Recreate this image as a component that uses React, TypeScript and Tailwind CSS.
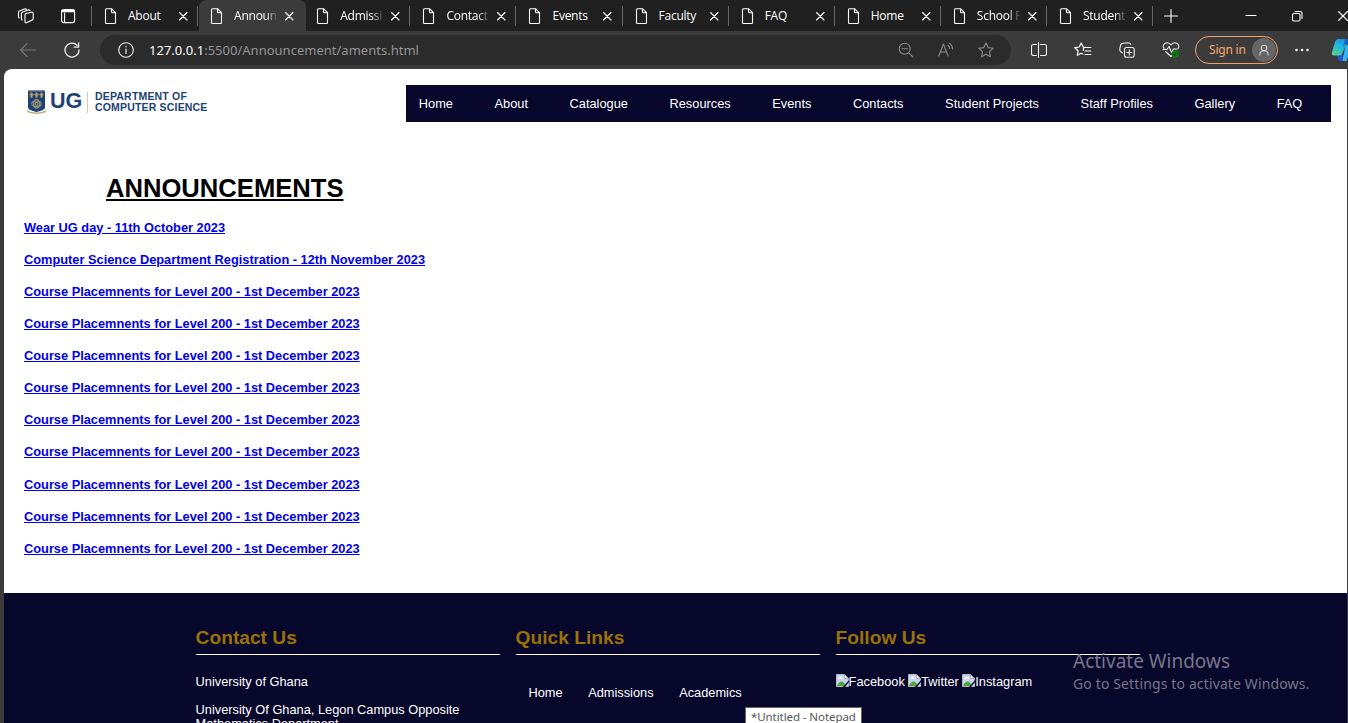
import type { ReactNode } from 'react'

const tabs = [
  { label: 'About' },
  { label: 'Announ', active: true, fade: true },
  { label: 'Admissi', fade: true },
  { label: 'Contact', fade: true },
  { label: 'Events' },
  { label: 'Faculty' },
  { label: 'FAQ' },
  { label: 'Home' },
  { label: 'School F', fade: true },
  { label: 'Student', fade: true },
]

const navLinks = ['Home', 'About', 'Catalogue', 'Resources', 'Events', 'Contacts', 'Student Projects', 'Staff Profiles', 'Gallery', 'FAQ']

const announcements = [
  'Wear UG day - 11th October 2023',
  'Computer Science Department Registration - 12th November 2023',
  ...Array.from({ length: 9 }, () => 'Course Placemnents for Level 200 - 1st December 2023'),
]

function Icon({ size = 16, className = '', children }: { size?: number; className?: string; children: ReactNode }) {
  return (
    <svg width={size} height={size} viewBox={`0 0 ${size} ${size}`} fill="none" stroke="currentColor" strokeWidth="1.1" strokeLinejoin="round" strokeLinecap="round" className={`shrink-0 ${className}`}>
      {children}
    </svg>
  )
}

function Tab({ label, active, fade }: { label: string; active?: boolean; fade?: boolean }) {
  return (
    <div className={`flex h-[31px] shrink-0 items-center ${active ? 'ml-px -mr-[1.500px] w-[106.700px] rounded-t-[7px] bg-[#3b3b3b] pl-[10px]' : 'w-[106.100px] pl-[11px]'}`}>
      <Icon className="text-white">
        <path d="M3.5 .7h5l4 4v9.8q0 1-1 1h-8q-1 0-1-1V1.7q0-1 1-1zM8.5 .7v3q0 1 1 1h3" />
      </Icon>
      <div className={`ml-[9px] w-[44px] overflow-hidden text-[12px] leading-4 tracking-[-0.250px] whitespace-nowrap text-white [font-family:'Open_Sans','Noto_Sans',sans-serif] ${fade ? '[mask-image:linear-gradient(to_right,black_72%,transparent)]' : ''}`}>{label}</div>
      <Icon size={12} className="ml-[5px] text-white">
        <path d="M2.5 2.5l7.5 7.5M10 2.5L2.5 10" />
      </Icon>
      <div className={`ml-auto h-5 w-px ${active ? '' : 'bg-[#666]'}`} />
    </div>
  )
}

function Cell({ width, children }: { width: string; children: ReactNode }) {
  return <div className={`flex h-full shrink-0 items-center justify-center ${width}`}>{children}</div>
}

function TabBar() {
  return (
    <div className="flex h-[31px] items-center bg-[#202020] text-white">
      <div className="flex w-[91px] shrink-0 items-center">
        <Icon size={18} className="ml-[17px]">
          <path d="M8 7.800q0-1 1-1.300l5.500-1.300q1.700-.3 1.700 1.300v5q0 1-.9 1.400l-5.300 2.700Q8 16.300 8 14.800zM5 13q-.6-.6-.6-1.500V6.600q0-1 .9-1.400L11 3q1.200-.4 2 .6M2.200 11Q1.500 10.500 1.500 9.500V5.400q0-1 .9-1.400l5-2q1.300-.5 2.200.5" />
        </Icon>
        <Icon className="ml-[25px]">
          <rect x="1.6" y="1.6" width="13" height="13" rx="2" />
          <path d="M2.500 3h11.300" strokeWidth="2.500" />
          <path d="M4.600 5v9.500" />
        </Icon>
      </div>
      <div className="h-5 w-px bg-[#666]" />
      {tabs.map((t) => (
        <Tab key={t.label} {...t} />
      ))}
      <Icon className="ml-[10px]">
        <path d="M8 1.500v13M1.500 8h13" />
      </Icon>
      <div className="ml-auto flex h-full w-[120px] shrink-0 overflow-hidden">
        <Cell width="w-[46px]">
          <Icon size={12}><path d="M1 5.500h10" /></Icon>
        </Cell>
        <Cell width="w-[46px]">
          <Icon size={12}>
            <rect x="1.500" y="3.500" width="7.500" height="7.500" rx="1.500" />
            <path d="M4 1.500h5q2 0 2 2v5" />
          </Icon>
        </Cell>
        <Cell width="w-[46px]">
          <Icon size={12}><path d="M1.500 1.500l9 9M10.500 1.500l-9 9" /></Icon>
        </Cell>
      </div>
    </div>
  )
}

const STAR = 'M8 .9l2.2 4.7 5.1.6-3.8 3.5 1 5.1L8 12.3l-4.5 2.5 1-5.1L.7 6.2l5.1-.6z'

function Toolbar() {
  return (
    <div className="flex h-[38px] items-center overflow-hidden bg-[#3b3b3b] text-[#f0f0f0]">
      <Icon className="ml-5 text-[#777]">
        <path d="M.7 8h15M7 1.500L.7 8 7 14.500" />
      </Icon>
      <Icon className="ml-[28px]">
        <path d="M15 8A7 7 0 1 1 13 3.200M14.600 .8v4.400h-4.400" strokeWidth="1.300" />
      </Icon>
      <div className="ml-5 flex h-[30px] w-[911px] shrink-0 items-center rounded-full bg-[#2b2b2b] pr-[5px] pl-[18px]">
        <Icon>
          <circle cx="8" cy="8" r="7.300" />
          <path d="M8 7v4.500M8 4.300v.5" />
        </Icon>
        <div className="ml-[15px] text-[13px] leading-5 tracking-[0.010px] whitespace-nowrap text-[#959595]">
          <span className="text-white">127.0.0.1</span>:5500/Announcement/aments.html
        </div>
        <div className="ml-auto flex h-full text-[#8a8a8a]">
          <Cell width="w-10">
            <Icon>
              <circle cx="6.700" cy="6.700" r="5.500" />
              <path d="M10.800 10.800l4 4M4 6.700h5.400" />
            </Icon>
          </Cell>
          <Cell width="w-10">
            <Icon>
              <path d="M.7 14L5.400 2l4.700 12M2.400 10h6M10 3.300q1.400 1 1.600 3.200M11.700 1.400q2.600 2 2.900 5.600" />
            </Icon>
          </Cell>
          <Cell width="w-10">
            <Icon><path d={STAR} /></Icon>
          </Cell>
        </div>
      </div>
      <div className="ml-[6px] flex h-full">
        <Cell width="w-11">
          <Icon>
            <path d="M5.500 2.500H2.500Q.5 2.500 .5 4.500v7q0 2 2 2h3M9.500 2.500h4q2 0 2 2v7q0 2-2 2h-4M7.500 .5v15" />
          </Icon>
        </Cell>
        <Cell width="w-11">
          <Icon size={18} className="text-white">
            <path d="M8.800 13L7 12.300l-3.700 2 .8-4.600L.8 6.700l4.400-.7L7.200 2l2 4 2.300.3M9.500 7l-.1 2.500M9.800 6.500h7M11 10h5.800M11 13.500h5.800" strokeWidth="1.200" />
          </Icon>
        </Cell>
        <Cell width="w-11">
          <Icon>
            <rect x="5.500" y="5.500" width="9.700" height="9.700" rx="2" />
            <path d="M10.300 8v5M7.800 10.500h5M3.500 11L1.500 9.500Q.6 8.500.8 7l.8-4Q2 1.300 4 1.200l5-.4q2 0 2.700 1.500" />
          </Icon>
        </Cell>
        <Cell width="w-11">
          <Icon size={18}>
            <path d="M2.200 8Q.5 5.500 1.800 3.500 3 1.600 5.300 1.700 7.500 1.800 9 3.800q1.500-2 3.700-2.100 2.300-.1 3.500 1.800Q17.500 5.500 15.800 8M1 8.500h4L7 5.500l2.700 6L11.500 8h3M3.500 10.500L9 15.500l2-1.800" />
            <circle cx="13.300" cy="13" r="3.700" fill="#107c10" stroke="none" />
            <path d="M11.500 13l1.300 1.200 2-2.200" stroke="#0b4f0b" />
          </Icon>
        </Cell>
      </div>
      <div className="ml-[2px] flex h-7 w-[83px] shrink-0 items-center justify-between rounded-full border border-[#f0a067] pr-[1px] pl-[13px] text-[12px] text-[#f7a871]">
        <span className="tracking-[-0.200px] whitespace-nowrap">Sign in</span>
        <span className="flex size-6 items-center justify-center rounded-full bg-[#666] text-[#d0d0d0]">
          <Icon size={12}>
            <circle cx="6" cy="4" r="2.800" />
            <path d="M1.800 11q0-4.200 4.200-4.200T10.200 11" />
          </Icon>
        </span>
      </div>
      <Icon className="ml-4">
        <g fill="currentColor" stroke="none">
          <circle cx="2.500" cy="8" r="1.300" />
          <circle cx="8" cy="8" r="1.300" />
          <circle cx="13.500" cy="8" r="1.300" />
        </g>
      </Icon>
      <svg width="24" height="24" viewBox="0 0 24 24" className="ml-[21px] shrink-0">
        <defs>
          <linearGradient id="cpA" x1="0.600" y1="0" x2="0.200" y2="1">
            <stop offset="0" stopColor="#1597e8" />
            <stop offset="0.450" stopColor="#22b8d8" />
            <stop offset="1" stopColor="#5ad08a" />
          </linearGradient>
        </defs>
        <path d="M6 17h8l-2 5q-1 1-2.500 1Q7.500 23 7 20.500z" fill="#1f58dc" />
        <path d="M7 1h10l-5 13q-1 3.500-4 3.500H3q-3 0-2-3.500L4 4Q5 1 7 1z" fill="url(#cpA)" />
        <path d="M14.500 7h6l-5 16h-4z" fill="#35b4f5" />
        <path d="M14 1h3l2 5h-4.500q-1.500 0-2 2l-1 3z" fill="#1565c8" />
      </svg>
    </div>
  )
}

function Logo() {
  return (
    <div className="flex h-[26px] items-center">
      <svg width="22" height="26" viewBox="0 0 22 26" className="shrink-0">
        <path d="M2 1.500h17v17q0 2.500-8.500 4.500Q2 21 2 18.500z" fill="#1c4175" />
        <path d="M2 1.500h17v1H2z" fill="#77808a" />
        <g fill="#b59c62">
          <path d="M5.500 3l1 1.500 1.500 1-1.500 1.200v2h-2v-2L3 5.500l1.500-1zM10.500 3l1 1.500 1.500 1-1.500 1.200v2h-2v-2L8 5.500l1.500-1zM15.500 3l1 1.500 1.500 1-1.500 1.200v2h-2v-2L13 5.500l1.500-1z" />
        </g>
        <g fill="none" stroke="#a6966d" strokeWidth="1.100">
          <circle cx="10.500" cy="14.800" r="1.400" />
          <ellipse cx="10.500" cy="14.800" rx="4.800" ry="2.800" />
          <ellipse cx="10.500" cy="14.800" rx="2.800" ry="4.300" />
        </g>
        <path d="M.5 21q9.500 5 20 0l-1 2.200q-9 3.600-18 0z" fill="#c2ad78" />
      </svg>
      <span className="ml-[2px] w-[31px] pb-[3px] text-[21.500px] leading-6 font-bold text-[#1c4175]">UG</span>
      <div className="ml-[6px] h-[21px] w-px bg-[#d5cbb2]" />
      <div className="ml-[7px] text-[10.500px] leading-[11px] font-bold tracking-[0.180px] whitespace-nowrap text-[#1c4175]">
        <div>DEPARTMENT OF</div>
        <div>COMPUTER SCIENCE</div>
      </div>
    </div>
  )
}

function BrokenImage({ alt }: { alt: string }) {
  return (
    <span className="flex items-start">
      <svg width="13" height="13" viewBox="0 0 13 13" className="-mt-px shrink-0">
        <path d="M.5 .5h8l4 4v8H.5z" fill="#c5d6f4" stroke="#b8b8b8" />
        <path d="M8.500 .5v4h4z" fill="#fff" stroke="#999" strokeWidth=".7" />
        <path d="M2 5q0-1.500 1.500-1.500Q4 2 5.500 3q1.500 0 1.500 2z" fill="#fff" />
        <path d="M1 12q2-5 5-4.500T9 12z" fill="#4ea63a" />
        <path d="M7 13l6-7v2l-4 5z" fill="#07052b" />
      </svg>
      {alt}
    </span>
  )
}

function FooterColumn({ title, children }: { title: string; children: ReactNode }) {
  return (
    <div className="w-[304px] shrink-0">
      <h2 className="box-content h-[27px] border-b border-white text-[19.200px] leading-[22px] font-bold text-[#9a7209]">{title}</h2>
      {children}
    </div>
  )
}

function Footer() {
  return (
    <footer className="flex h-[130px] gap-4 bg-[#07062b] pt-[34px] pl-[191.600px] text-[12.800px] leading-[14px] text-white">
      <FooterColumn title="Contact Us">
        <p className="mt-[20px]">University of Ghana</p>
        <p className="mt-[14px]">
          University Of Ghana, Legon Campus Opposite
          <br />
          Mathematics Department
        </p>
      </FooterColumn>
      <FooterColumn title="Quick Links">
        <div className="mt-[31px] flex gap-[25.600px] pl-[12.800px]">
          <span>Home</span>
          <span>Admissions</span>
          <span>Academics</span>
        </div>
      </FooterColumn>
      <FooterColumn title="Follow Us">
        <div className="mt-[20px] flex gap-[3.400px]">
          <BrokenImage alt="Facebook" />
          <BrokenImage alt="Twitter" />
          <BrokenImage alt="Instagram" />
        </div>
      </FooterColumn>
    </footer>
  )
}

export default function App() {
  return (
    <div className="relative h-[723px] w-[1348px] overflow-hidden bg-[#3b3b3b] [font-family:'Noto_Sans','Open_Sans',sans-serif]">
      <TabBar />
      <Toolbar />
      <main className="ml-1 flex h-[654px] w-[1343px] flex-col overflow-hidden rounded-tl-[8px] bg-white [font-family:'Liberation_Sans',Arial,sans-serif]">
        <header className="flex h-[53px] shrink-0 items-start justify-between pt-4 pr-4 pl-[22px]">
          <div className="pt-[4px]"><Logo /></div>
          <nav className="flex h-[37px] w-[925px] items-center gap-[41.600px] bg-[#07062b] pl-[12.800px] text-[12.800px] whitespace-nowrap text-white">
            {navLinks.map((l) => (
              <a key={l}>{l}</a>
            ))}
          </nav>
        </header>
        <section className="h-[471px] shrink-0 pt-[52px] pl-5">
          <h1 className="pl-[82px] text-[25.600px] leading-[29px] font-bold text-black underline">ANNOUNCEMENTS</h1>
          <ul className="mt-[8.200px] text-[12.800px] font-bold text-[#0000ee]">
            {announcements.map((a, i) => (
              <li key={i} className="flex h-[32.120px] items-center underline">{a}</li>
            ))}
          </ul>
        </section>
        <Footer />
      </main>
      <div className="pointer-events-none absolute top-[649px] left-[1073px] whitespace-nowrap text-[#777788]">
        <div className="text-[19px] leading-[25px]">Activate Windows</div>
        <div className="text-[14px] leading-[20px] tracking-[0.130px]">Go to Settings to activate Windows.</div>
      </div>
      <div className="absolute top-[707px] left-[745px] h-5 w-[117px] border border-[#666] bg-white pl-[5px] text-[11.500px] leading-[18px] tracking-[-0.080px] whitespace-nowrap text-[#575757]">*Untitled - Notepad</div>
    </div>
  )
}
